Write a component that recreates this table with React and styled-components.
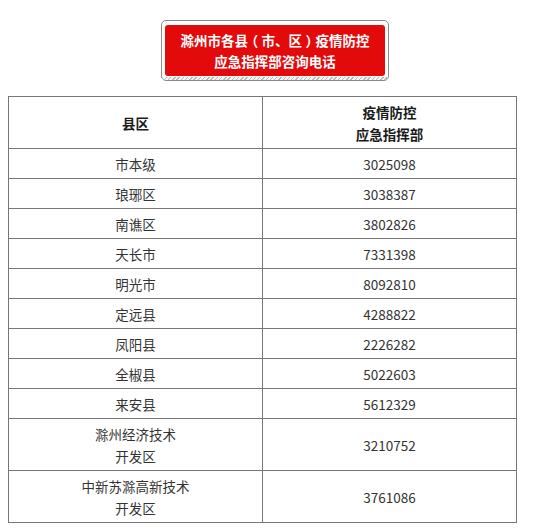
import styled, { createGlobalStyle } from "styled-components";

const GlobalStyle = createGlobalStyle`
  html, body {
    margin: 0;
    padding: 0;
    background: #fff;
  }
  body {
    font-family: "Noto Sans CJK SC", "Noto Sans", sans-serif;
  }
`;

const rows = [
  ["市本级", "3025098"],
  ["琅琊区", "3038387"],
  ["南谯区", "3802826"],
  ["天长市", "7331398"],
  ["明光市", "8092810"],
  ["定远县", "4288822"],
  ["凤阳县", "2226282"],
  ["全椒县", "5022603"],
  ["来安县", "5612329"],
  [["滁州经济技术", "开发区"], "3210752"],
  [["中新苏滁高新技术", "开发区"], "3761086"],
];

const Page = styled.div`
  padding: 20px 0 0 8px;
  display: flex;
  flex-direction: column;
`;

const BannerWrap = styled.div`
  display: flex;
  justify-content: center;
  margin-left: -8px;
`;

const Banner = styled.div`
  width: 228px;
  height: 61px;
  border: 1px solid #8a8a8a;
  border-radius: 5px;
  background: #fff;
  box-sizing: border-box;
  padding: 4px 3px 0;
  display: flex;
  flex-direction: column;
  overflow: hidden;
`;

const RedBox = styled.div`
  background: #e20a0a;
  border-radius: 3px;
  height: 51px;
  display: flex;
  flex-direction: column;
  align-items: center;
  justify-content: center;
  color: #fff;
  font-weight: 700;
  font-size: 13.5px;
  line-height: 21px;
`;

// full-width bracket, half-width glyph centred in its own em box
const Paren = styled.span`
  display: inline-block;
  width: 1em;
  text-align: center;
  font-feature-settings: "halt";
`;

const Hatch = styled.div`
  margin: 1px -3px 0;
  flex: 1;
  background: repeating-linear-gradient(
    135deg,
    #b8b8b8 0 1px,
    #f4f4f4 1px 3px
  );
`;

const Table = styled.table`
  margin-top: 15px;
  width: 509px;
  border-collapse: collapse;
  table-layout: fixed;
  font-size: 13.5px;
  line-height: 22px;
`;

const Cell = styled.td`
  border: 1px solid #777;
  text-align: center;
  vertical-align: middle;
  padding: 4px 0 3px;
  color: ${(p) => (p.$head ? "#1a1a1a" : "#333")};
  font-weight: ${(p) => (p.$head ? 700 : 400)};
`;

const Lines = ({ text }) =>
  Array.isArray(text) ? (
    text.map((t, i) => <div key={i}>{t}</div>)
  ) : (
    <div>{text}</div>
  );

export default function App() {
  return (
    <>
      <GlobalStyle />
      <Page>
        <BannerWrap>
          <Banner>
            <RedBox>
              <div>
                滁州市各县<Paren>（</Paren>市、区<Paren>）</Paren>疫情防控
              </div>
              <div>应急指挥部咨询电话</div>
            </RedBox>
            <Hatch />
          </Banner>
        </BannerWrap>
        <Table>
          <tbody>
            <tr>
              <Cell $head>县区</Cell>
              <Cell $head>
                <Lines text={["疫情防控", "应急指挥部"]} />
              </Cell>
            </tr>
            {rows.map(([name, phone]) => (
              <tr key={phone}>
                <Cell>
                  <Lines text={name} />
                </Cell>
                <Cell>{phone}</Cell>
              </tr>
            ))}
          </tbody>
        </Table>
      </Page>
    </>
  );
}
